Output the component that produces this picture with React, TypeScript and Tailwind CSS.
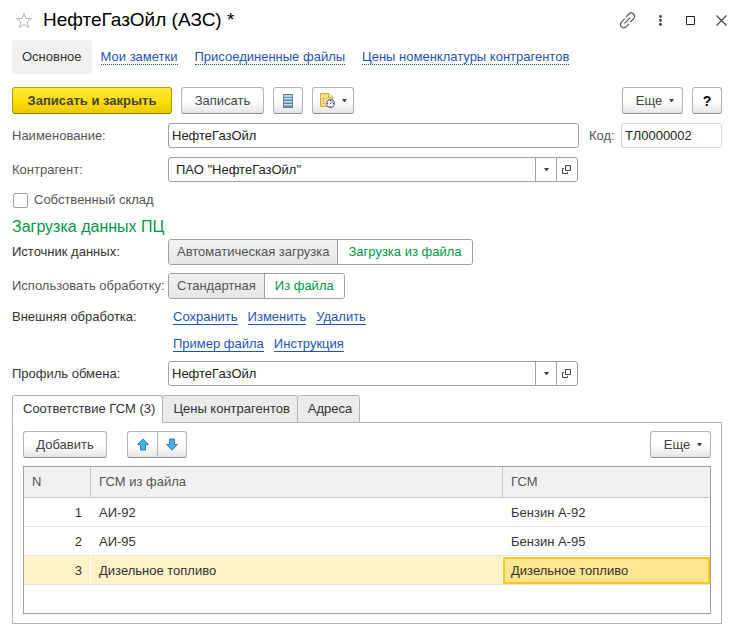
import { useState, type ReactNode } from "react";

const navLinks = ["Мои заметки", "Присоединенные файлы", "Цены номенклатуры контрагентов"];

const rows = [
  { n: 1, source: "АИ-92", fuel: "Бензин А-92" },
  { n: 2, source: "АИ-95", fuel: "Бензин А-95" },
  { n: 3, source: "Дизельное топливо", fuel: "Дизельное топливо" },
];

const buttonBase =
  "flex h-[27px] items-center justify-center rounded-[3px] border border-[#b3b3b3] border-b-[#8e8e8e] bg-linear-to-b from-white from-50% to-[#e6e6e6] text-[#444]";

function Caret() {
  return (
    <svg width="5" height="3" viewBox="0 0 5 3" aria-hidden="true" className="shrink-0">
      <path d="M0 0h5L3 3H2z" fill="#444" />
    </svg>
  );
}

function OpenIcon() {
  return (
    <svg width="10" height="10" viewBox="0 0 10 10" aria-hidden="true" fill="none" stroke="#444">
      <path d="M3.5 0.500h5v5h-5zM2 3.500H0.500v5h5V7" />
    </svg>
  );
}

function Arrow({ down = false }: { down?: boolean }) {
  return (
    <svg width="12" height="13" viewBox="0 0 12 13" aria-hidden="true" className={down ? "rotate-180" : ""}>
      <path d="M6 0.8L11.3 6.5H8.5V12H3.5V6.5H0.7z" fill="#45b0ee" stroke="#2e7fb5" strokeLinejoin="round" />
    </svg>
  );
}

function MoreButton() {
  return (
    <button type="button" className={`${buttonBase} w-[61px] gap-[7px] pl-[5px]`}>
      <span>Еще</span>
      <Caret />
    </button>
  );
}

function Field({ id, label, dark = false, children }: { id?: string; label: string; dark?: boolean; children: ReactNode }) {
  const cls = `w-[156px] shrink-0 whitespace-nowrap ${dark ? "text-[#333]" : "text-[#555]"}`;
  return (
    <div className="flex items-center">
      {id ? <label htmlFor={id} className={cls}>{label}</label> : <span className={cls}>{label}</span>}
      {children}
    </div>
  );
}

function Combo({ id, value, inset = false }: { id: string; value: string; inset?: boolean }) {
  return (
    <div className="mr-[144px] flex h-[25px] min-w-0 flex-1 overflow-hidden rounded-[3px] border border-[#a0a0a0]">
      <input id={id} defaultValue={value} className={`min-w-0 flex-1 text-[#222] outline-none ${inset ? "pl-[7px]" : "pl-[3px]"}`} />
      <button type="button" aria-label="Выбрать" className="flex w-[21px] items-center justify-center border-l border-[#a0a0a0]">
        <Caret />
      </button>
      <button type="button" aria-label="Открыть" className="flex w-[21px] items-center justify-center border-l border-[#a0a0a0]">
        <OpenIcon />
      </button>
    </div>
  );
}

function Switch({ options, label }: { options: string[]; label: string }) {
  const [active, setActive] = useState(1);
  return (
    <div role="group" aria-label={label} className="flex h-[26px] overflow-hidden rounded-[3px] border border-[#a0a0a0]">
      {options.map((o, i) => (
        <button
          key={o}
          type="button"
          aria-pressed={i === active}
          onClick={() => setActive(i)}
          className={`${i ? "border-l border-[#a0a0a0] px-[10px]" : "px-2"} ${
            i === active ? "bg-white text-[#009646]" : "bg-linear-to-b from-[#f2f2f2] to-[#e6e6e6] text-[#555]"
          }`}
        >
          {o}
        </button>
      ))}
    </div>
  );
}

function TextLink({ children }: { children: string }) {
  return (
    <a href="#" className="border-b border-[#1c55ae] leading-[14px] text-[#1c55ae]">
      {children}
    </a>
  );
}

export default function App() {
  const [tab, setTab] = useState(0);
  const [own, setOwn] = useState(false);
  return (
    <main className="bg-white pb-[11px] pl-3 pr-[19px] font-['Liberation_Sans',Arial,sans-serif] text-[13px] leading-4 text-[#333]">
      <header className="flex h-10 items-center">
        <button type="button" aria-label="В избранное" className="ml-[3px]">
          <svg width="18" height="17" viewBox="0 0 18 17" aria-hidden="true" fill="none" stroke="#adb3bb">
            <path d="M9 1.3l2 5.2 5.6.1-4.4 3.5 1.6 5.5L9 12.4l-4.8 3.2 1.6-5.5L1.4 6.6 7 6.5z" />
          </svg>
        </button>
        <h1 className="ml-[10px] flex-1 text-[19px] leading-6 text-black">НефтеГазОйл (АЗС) *</h1>
        <div className="-mr-[5px] flex items-center">
          <button type="button" aria-label="Ссылка" className="mr-[23px]">
            <svg width="17" height="17" viewBox="0 0 17 17" aria-hidden="true" fill="none" stroke="#555" strokeWidth="1.2" strokeLinecap="round">
              <path d="M7.2 4.6l2.6-2.6a3.3 3.3 0 0 1 4.8 0a3.3 3.3 0 0 1 0 4.7l-3 3M9.8 12.2l-2.7 2.7a3.3 3.3 0 0 1-4.7 0a3.3 3.3 0 0 1 0-4.8l3-3M5.8 11.2l5.2-5.3" />
            </svg>
          </button>
          <button type="button" aria-label="Меню" className="mr-[24px]">
            <svg width="3" height="11" viewBox="0 0 3 11" aria-hidden="true" fill="#444">
              <circle cx="1.5" cy="1.5" r="1.4" />
              <circle cx="1.5" cy="5.5" r="1.4" />
              <circle cx="1.5" cy="9.5" r="1.4" />
            </svg>
          </button>
          <button type="button" aria-label="Развернуть" className="mr-[21px]">
            <svg width="9" height="9" viewBox="0 0 9 9" aria-hidden="true" fill="none" stroke="#222">
              <path d="M0.5 0.5h8v8h-8z" />
            </svg>
          </button>
          <button type="button" aria-label="Закрыть">
            <svg width="11" height="11" viewBox="0 0 11 11" aria-hidden="true" fill="none" stroke="#444" strokeWidth="1.2">
              <path d="M0.5 0.5l10 10M10.5 0.5l-10 10" />
            </svg>
          </button>
        </div>
      </header>

      <nav className="flex items-center">
        <a href="#" aria-current="page" className="mr-[9px] rounded-[3px] bg-[#f1f1f1] px-[10px] py-[9px]">
          Основное
        </a>
        <div className="flex gap-[17px] pt-px">
          {navLinks.map((l) => (
            <a key={l} href="#" className="border-b border-dotted border-[#1c55ae] leading-[14px] text-[#1c55ae]">
              {l}
            </a>
          ))}
        </div>
      </nav>

      <div className="mt-[13px] flex gap-[9px]">
        <button
          type="button"
          className="h-[27px] w-40 rounded-[3px] border border-[#b09a00] border-b-[#8f7d00] bg-linear-to-b from-[#ffe838] via-[#ffe000] to-[#e8c800] font-bold text-[#444]"
        >
          Записать и закрыть
        </button>
        <button type="button" className={`${buttonBase} w-[83px]`}>Записать</button>
        <button type="button" aria-label="Список" className={`${buttonBase} w-[30px]`}>
          <svg width="10" height="14" viewBox="0 0 10 14" aria-hidden="true">
            <path d="M0 0h10v14H0z" fill="#5f86a5" />
            <path d="M1 1h8v2H1z" fill="#b9d3e6" />
            <path d="M1 4h8v2H1zM1 7h8v2H1zM1 10h8v2H1z" fill="#8fb2cc" />
            <path d="M1 4.500h8M1 7.500h8M1 10.500h8" stroke="#c9dcea" />
          </svg>
        </button>
        <button type="button" aria-label="Создать на основании" className={`${buttonBase} w-[42px] gap-[7px]`}>
          <svg width="15" height="15" viewBox="0 0 15 15" aria-hidden="true">
            <path d="M0.5 0.5H9L12.5 4v9.500H0.5z" fill="#fbe08a" stroke="#d3a93c" />
            <path d="M8.500 0.5V4.500h4" fill="#fff3c4" stroke="#d3a93c" />
            <path d="M2.500 5.500h4M2.500 8h3M2.500 10.500h2" stroke="#c99b2d" strokeDasharray="2 1" />
            <circle cx="10.500" cy="10.500" r="3.900" fill="#fff" stroke="#4f7fb5" strokeWidth="1.200" />
            <path d="M10.500 10.500V7.500a3 3 0 0 1 3 3z" fill="#9dc0e6" />
            <path d="M10 7h1v1h-1zM10 13h1v1h-1zM7 10h1v1H7zM13 10h1v1h-1zM10 10h1v1h-1z" fill="#e02020" />
          </svg>
          <Caret />
        </button>
        <div className="flex-1" />
        <MoreButton />
        <button type="button" aria-label="Справка" className={`${buttonBase} w-[30px] text-sm font-bold text-black`}>?</button>
      </div>

      <form className="mt-[9px]" onSubmit={(e) => e.preventDefault()}>
        <Field id="name" label="Наименование:">
          <input id="name" defaultValue="НефтеГазОйл" className="h-[25px] min-w-0 flex-1 rounded-[3px] border border-[#a0a0a0] pl-[3px] text-[#222] outline-none" />
          <label htmlFor="code" className="ml-[10px] w-8 text-[#555]">Код:</label>
          <input id="code" defaultValue="ТЛ0000002" className="h-[25px] w-[101px] rounded-[3px] border border-[#d5d5d5] pl-[3px] text-[#222] outline-none" />
        </Field>
        <div className="mt-[9px]">
          <Field id="partner" label="Контрагент:">
            <Combo id="partner" value={'ПАО "НефтеГазОйл"'} inset />
          </Field>
        </div>
        <label className="mt-[10px] flex w-fit items-center gap-[6px] pl-px text-[#555]">
          <input
            type="checkbox"
            checked={own}
            onChange={(e) => setOwn(e.target.checked)}
            className="size-[15px] appearance-none rounded-[2px] border border-[#a0a0a0] bg-white checked:bg-[#009646]"
          />
          Собственный склад
        </label>
        <h2 className="mt-[9px] text-[16px] leading-5 text-[#009646]">Загрузка данных ПЦ</h2>
        <div className="mt-[2px] flex flex-col gap-2">
          <Field label="Источник данных:" dark>
            <Switch label="Источник данных" options={["Автоматическая загрузка", "Загрузка из файла"]} />
          </Field>
          <Field label="Использовать обработку:">
            <Switch label="Использовать обработку" options={["Стандартная", "Из файла"]} />
          </Field>
        </div>
        <div className="mt-[10px]">
          <Field label="Внешняя обработка:" dark>
            <div className="flex gap-[10px] pl-[5px]">
              <TextLink>Сохранить</TextLink>
              <TextLink>Изменить</TextLink>
              <TextLink>Удалить</TextLink>
            </div>
          </Field>
        </div>
        <div className="mt-3 flex gap-[10px] pl-[161px]">
          <TextLink>Пример файла</TextLink>
          <TextLink>Инструкция</TextLink>
        </div>
        <div className="mt-[9px]">
          <Field id="profile" label="Профиль обмена:" dark>
            <Combo id="profile" value="НефтеГазОйл" />
          </Field>
        </div>
      </form>

      <section className="mt-[9px]">
        <div role="tablist" className="flex">
          {["Соответствие ГСМ (3)", "Цены контрагентов", "Адреса"].map((t, i) => (
            <button
              key={t}
              type="button"
              role="tab"
              aria-selected={i === tab}
              onClick={() => setTab(i)}
              className={`h-7 rounded-t-[3px] border border-[#b3b3b3] pl-[10px] pr-[7px] ${i ? "-ml-px" : ""} ${
                i === tab ? "border-b-white bg-white" : "bg-[#ebebeb]"
              }`}
            >
              {t}
            </button>
          ))}
          <div className="flex-1 border-b border-[#b3b3b3]" />
        </div>
        <div role="tabpanel" className="border border-t-0 border-[#b3b3b3] px-[10px] pb-[9px] pt-2">
          <div className="flex">
            <button type="button" className={`${buttonBase} w-[84px]`}>Добавить</button>
            <button type="button" aria-label="Вверх" className={`${buttonBase} ml-5 w-[31px] rounded-r-none`}>
              <Arrow />
            </button>
            <button type="button" aria-label="Вниз" className={`${buttonBase} -ml-px w-[30px] rounded-l-none`}>
              <Arrow down />
            </button>
            <div className="flex-1" />
            <MoreButton />
          </div>
          <div className="mt-2 border border-[#a0a0a0] pb-7">
            <table className="w-full table-fixed border-separate border-spacing-0">
              <colgroup>
                <col className="w-[67px]" />
                <col />
                <col className="w-[207px]" />
              </colgroup>
              <thead>
                <tr className="h-[31px] text-left text-[#555]">
                  <th className="border-b border-r border-[#c8c8c8] bg-[#f1f1f1] pl-2 font-normal">N</th>
                  <th className="border-b border-r border-[#c8c8c8] bg-[#f1f1f1] pl-2 font-normal">ГСМ из файла</th>
                  <th className="border-b border-[#c8c8c8] bg-[#f1f1f1] pl-2 font-normal">ГСМ</th>
                </tr>
              </thead>
              <tbody>
                {rows.map((r) => {
                  const sel = r.n === 3;
                  const cell = sel ? "bg-[#fff2c6] border-r border-r-white" : "";
                  return (
                    <tr key={r.n} className="h-[29px]">
                      <td className={`border-b border-b-[#e3e3e3] pt-[2px] text-right ${sel ? "pr-2" : "pr-[9px]"} ${cell}`}>{r.n}</td>
                      <td className={`border-b border-b-[#e3e3e3] pl-2 pt-[2px] ${cell}`}>{r.source}</td>
                      <td className={`border-b border-b-[#e3e3e3] p-0 ${sel ? "" : "pt-[2px]"}`}>
                        <div className={`flex items-center ${sel ? "h-[27px] border-2 border-[#fcc81e] bg-[#ffe48f] pl-[6px] pt-px" : "pl-2"}`}>
                          {r.fuel}
                        </div>
                      </td>
                    </tr>
                  );
                })}
              </tbody>
            </table>
          </div>
        </div>
      </section>
    </main>
  );
}
